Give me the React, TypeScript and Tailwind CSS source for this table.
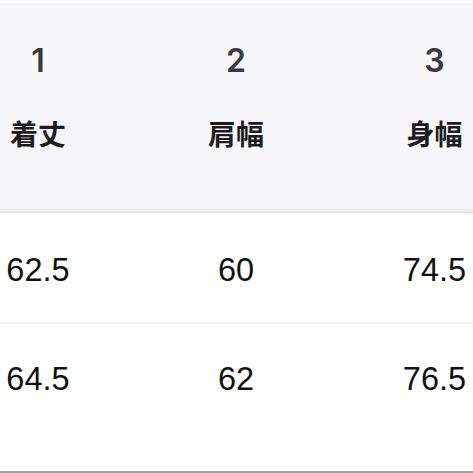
import React from "react";

const cols = "grid grid-cols-[76px_320px_77px]";
const heads = ["1", "2", "3"];
const labels = ["着丈", "肩幅", "身幅"];
const rows = [
  ["62.5", "60", "74.5"],
  ["64.5", "62", "76.5"],
];

export default function App() {
  return (
    <div className="w-[473px] h-[473px] bg-white overflow-hidden flex flex-col" style={{ fontFamily: '"Liberation Sans", Arial, sans-serif' }}>
      <div className="h-[3px] bg-white" />
      <div className="bg-[#f7f7f9] h-[206px] flex flex-col">
        <div className={`${cols} pt-[37px]`}>
          {heads.map((h) => (
            <div key={h} className="flex justify-center text-[32px] leading-[42px] font-semibold text-[#3a3a3c]" style={{ fontFamily: 'Inter, "Liberation Sans", sans-serif' }}>
              {h}
            </div>
          ))}
        </div>
        <div className={`${cols} pt-[31px]`}>
          {labels.map((l) => (
            <div key={l} className="flex justify-center text-[28px] leading-[40px] font-bold text-[#1c1c1e]" style={{ fontFamily: '"Noto Sans CJK JP", sans-serif' }}>
              {l}
            </div>
          ))}
        </div>
      </div>
      <div className="h-px bg-[#e6e6ea]" />
      <div className="h-[2px] bg-[#f1f1f3]" />
      <div className="h-px bg-[#dcdce0]" />
      {rows.map((r, i) => (
        <div key={i} className={`${cols} h-[111px] items-center ${i === 0 ? "border-b-2 border-[#f0f0f2] pt-[6px]" : ""}`}>
          {r.map((v, j) => (
            <div key={j} className="flex justify-center text-[32.5px] leading-none text-[#111111] pb-[1px]">
              {v}
            </div>
          ))}
        </div>
      ))}
      <div className="flex-1" />
      <div className="h-[2px] bg-[#a0a0a0]" />
    </div>
  );
}
